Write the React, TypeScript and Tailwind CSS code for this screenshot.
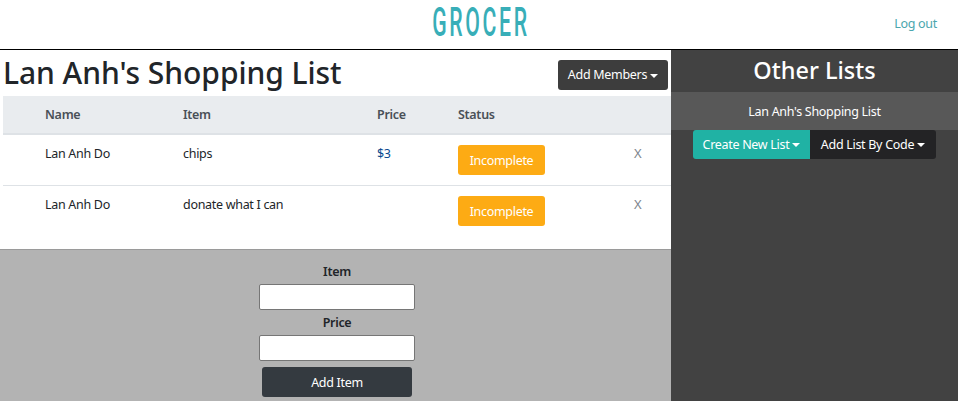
const font = "font-['Noto_Sans',sans-serif]";
const body = "text-[12.5px] tracking-[-0.3px]";

const Caret = () => (
  <span className="ml-[3px] inline-block align-middle border-x-[4px] border-t-[4px] border-x-transparent border-t-current" />
);

const rows = [
  { name: "Lan Anh Do", item: "chips", price: "$3" },
  { name: "Lan Anh Do", item: "donate what I can", price: "" },
];

const Row = ({ name, item, price }: { name: string; item: string; price: string }) => (
  <div className={`flex h-[51px] border-b border-[#dee2e6] pt-[10px] ${body} text-[#212529] last:border-b-0`}>
    <div className="w-[180px] pl-[42px] leading-[17px]">{name}</div>
    <div className="w-[194px] leading-[17px]">{item}</div>
    <div className="w-[81px] leading-[17px] text-[#0b4a8f]">{price}</div>
    <div className="w-[176px]">
      <button className={`h-[30px] w-[87px] rounded-[3px] bg-[#fdab14] pt-[2px] ${body} text-white`}>Incomplete</button>
    </div>
    <div className="text-[13px] leading-[17px] text-[#7d858c]">X</div>
  </div>
);

const Field = ({ label }: { label: string }) => (
  <div className="flex flex-col items-center">
    <label className={`mb-[3px] pt-px ${body} font-semibold leading-[18px] text-[#212529]`}>{label}</label>
    <input className="h-[26px] w-[156px] rounded-[2px] border border-[#767676] bg-white" />
  </div>
);

export default function App() {
  return (
    <div className={`${font} h-[401px] w-[958px] overflow-hidden bg-white`}>
      <header className="relative flex h-[50px] items-center justify-center border-b border-black">
        <span className="ml-[3px] -mt-[3px] font-['Roboto',sans-serif] text-[40px] font-medium leading-none tracking-[5px] text-[#38aeb8] scale-x-[0.53]">
          GROCER
        </span>
        <a className={`absolute right-[21px] top-[15px] ${body} leading-[18px] text-[#4ba6ae]`}>Log out</a>
      </header>
      <div className="flex h-[351px]">
        <main className="flex w-[671px] flex-col">
          <div className="flex h-[46px] items-start justify-between px-[3px]">
            <h1 className="text-[30px] font-medium leading-[46px] tracking-[-0.05px] text-[#212529]">Lan Anh's Shopping List</h1>
            <button className={`mt-[10px] h-[30px] w-[110px] rounded-[3px] bg-[#3d3d3d] pt-px ${body} text-white`}>
              Add Members
              <Caret />
            </button>
          </div>
          <div className="ml-[3px] h-[153px]">
            <div className={`flex h-[39px] items-center border-b-2 border-[#dee2e6] bg-[#e9ecef] pt-px ${body} font-semibold text-[#495057]`}>
              <div className="w-[180px] pl-[42px]">Name</div>
              <div className="w-[194px]">Item</div>
              <div className="w-[81px]">Price</div>
              <div>Status</div>
            </div>
            {rows.map((row, i) => (
              <Row key={i} {...row} />
            ))}
          </div>
          <form className="flex flex-1 flex-col items-center gap-[3px] border-t border-[#9a9a9a] bg-[#b3b3b3] pl-[3px] pt-[12px]">
            <Field label="Item" />
            <Field label="Price" />
            <button type="button" className={`mt-[3px] h-[30px] w-[150px] rounded-[3px] bg-[#343a40] pt-[2px] ${body} text-white`}>
              Add Item
            </button>
          </form>
        </main>
        <aside className="flex w-[287px] flex-col items-center bg-[#424242] text-white">
          <h2 className="h-[42px] text-[23.5px] font-medium leading-[41px]">Other Lists</h2>
          <div className={`flex h-[38px] w-full items-center justify-center bg-[#585858] pt-[2px] ${body}`}>Lan Anh's Shopping List</div>
          <div className="flex">
            <button className={`h-[29px] w-[117px] rounded-l-[3px] bg-[#20b2a4] pt-px ${body} text-white`}>
              Create New List
              <Caret />
            </button>
            <button className={`h-[29px] w-[126px] rounded-r-[3px] bg-[#232325] pt-px ${body} text-white`}>
              Add List By Code
              <Caret />
            </button>
          </div>
        </aside>
      </div>
    </div>
  );
}
